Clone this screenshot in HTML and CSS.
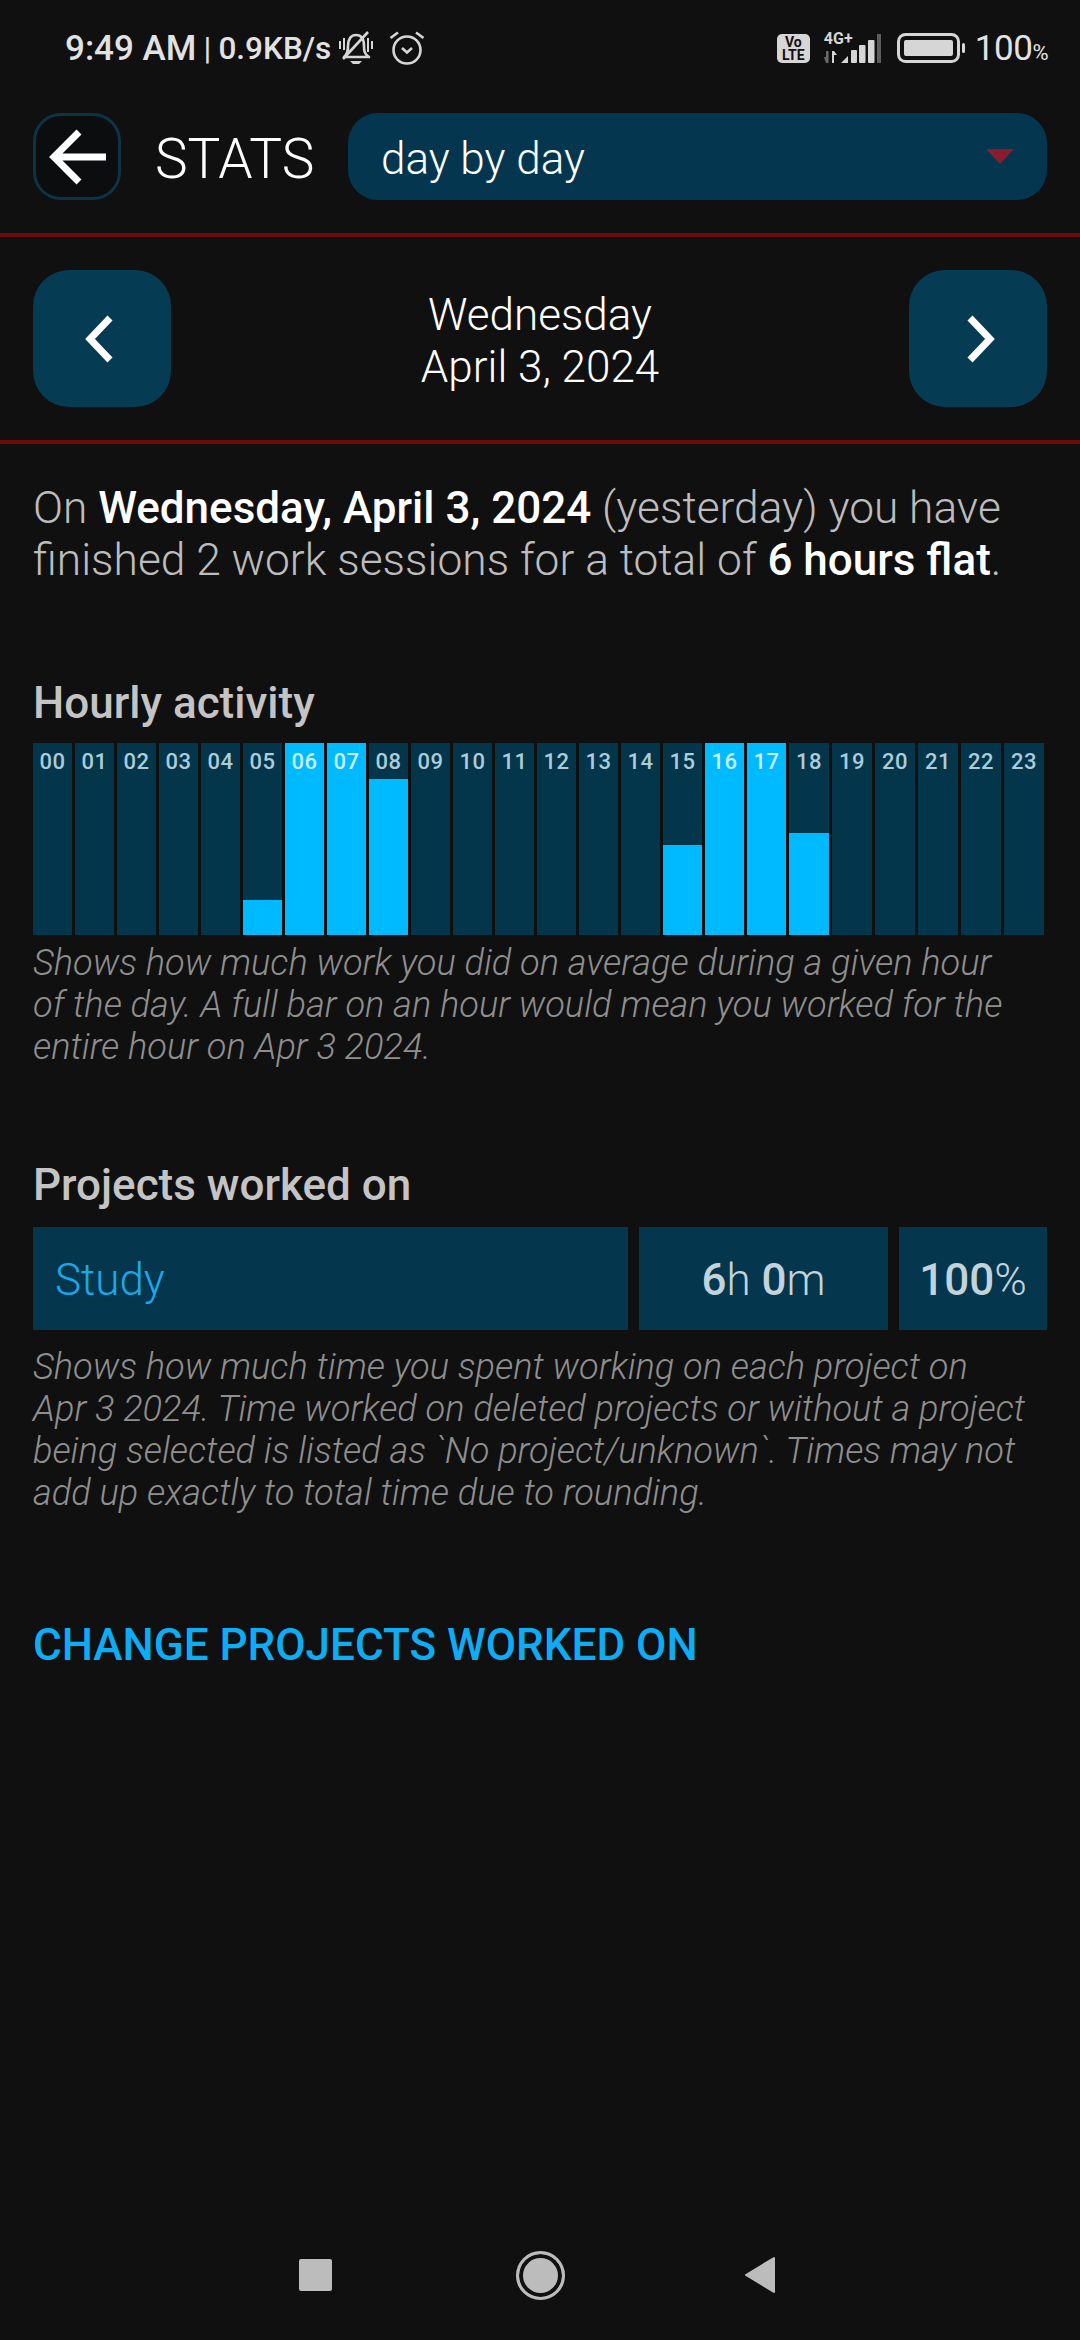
FILE: index.html
```html
<!DOCTYPE html>
<html lang="en">

<head>
  <meta charset="UTF-8" />
  <title>Stats</title>
  <meta name="viewport" content="width=device-width, initial-scale=1.0" />
  <link rel="stylesheet" href="styles.css">
</head>

<body>
  <div class="status">
    <div class="status-left">
      <span class="clock">9:49 AM</span>
      <span class="pipe">|</span>
      <span class="speed">0.9KB/s</span>
      <svg class="bell" width="34" height="34" viewBox="0 0 34 34">
        <path d="M5 26 C9 23 9 19 9 15 C9 8 12 4 17 4 C22 4 25 8 25 15 C25 19 25 23 30 26 Z" fill="none" stroke="#d6d6d6" stroke-width="2.600" stroke-linejoin="round" />
        <path d="M11 30 H23 L20 33 H14 Z" fill="#d6d6d6" />
        <path d="M4 28 L29 1" stroke="#d6d6d6" stroke-width="2.600" />
        <path d="M1 10 V18 M33 10 V18 M29 7 V21 M5 7 V19" stroke="#d6d6d6" stroke-width="2" />
      </svg>
      <svg class="alarm" width="36" height="34" viewBox="0 0 36 34">
        <circle cx="18" cy="19" r="13.500" fill="none" stroke="#d6d6d6" stroke-width="2.600" />
        <path d="M13 17 L18 21.500 L23 17" fill="none" stroke="#d6d6d6" stroke-width="2.600" />
        <path d="M1.500 7 L9 1.500 M34.500 7 L27 1.500" stroke="#d6d6d6" stroke-width="2.600" />
      </svg>
    </div>
    <div class="status-right">
      <span class="volte">Vo<br>LTE</span>
      <div class="signal">
        <span class="net">4G+</span>
        <svg width="57" height="31" viewBox="0 0 57 31">
          <path d="M2 18 H4.500 V30 H2 Z M0 24 H2 V30 Z" fill="#6a6a6a" />
          <path d="M8 18 H10 V30 H8 Z M10 18 L13 22 H10 Z" fill="#d6d6d6" />
          <path d="M17 30 L24 23 V30 Z" fill="#d6d6d6" />
          <rect x="27" y="17" width="6" height="13" rx="1" fill="#d6d6d6" />
          <rect x="35" y="12" width="6.500" height="18" rx="1" fill="#d6d6d6" />
          <rect x="44" y="7" width="6.500" height="23" rx="1" fill="#d6d6d6" />
          <rect x="53" y="1" width="4" height="29" fill="#5c5c5c" />
        </svg>
      </div>
      <svg class="battery" width="68" height="30" viewBox="0 0 68 30">
        <rect x="1.500" y="1.500" width="60" height="27" rx="7" fill="none" stroke="#d6d6d6" stroke-width="3" />
        <rect x="7" y="7" width="49" height="16" rx="2" fill="#d6d6d6" />
        <rect x="65" y="10" width="3" height="10" rx="1.500" fill="#d6d6d6" />
      </svg>
      <span class="charge">100<small>%</small></span>
    </div>
  </div>

  <div class="topbar">
    <button class="back">
      <svg width="58" height="58" viewBox="0 0 58 58">
        <path d="M31 4 L6 29 L31 54 M6 29 H58" fill="none" stroke="#fff" stroke-width="7" />
      </svg>
    </button>
    <h1>STATS</h1>
    <div class="picker">
      <span>day by day</span>
      <i class="caret"></i>
    </div>
  </div>

  <div class="datebar">
    <button class="nav prev">
      <svg width="30" height="48" viewBox="0 0 30 48">
        <path d="M26 3 L6 24 L26 45" fill="none" stroke="#fff" stroke-width="7" />
      </svg>
    </button>
    <div class="date">Wednesday<br>April 3, 2024</div>
    <button class="nav next">
      <svg width="30" height="48" viewBox="0 0 30 48">
        <path d="M4 3 L24 24 L4 45" fill="none" stroke="#fff" stroke-width="7" />
      </svg>
    </button>
  </div>

  <div class="content">
    <p class="summary">On <b>Wednesday, April 3, 2024</b> (yesterday) you have finished 2 work sessions for a total of <b>6 hours flat</b>.</p>

    <h2 class="hourly-title">Hourly activity</h2>
    <div class="chart">
      <div class="bar"><span>00</span></div>
      <div class="bar"><span>01</span></div>
      <div class="bar"><span>02</span></div>
      <div class="bar"><span>03</span></div>
      <div class="bar"><span>04</span></div>
      <div class="bar"><i style="height:18%"></i><span>05</span></div>
      <div class="bar on"><i style="height:100%"></i><span>06</span></div>
      <div class="bar on"><i style="height:100%"></i><span>07</span></div>
      <div class="bar"><i style="height:81.500%"></i><span>08</span></div>
      <div class="bar"><span>09</span></div>
      <div class="bar"><span>10</span></div>
      <div class="bar"><span>11</span></div>
      <div class="bar"><span>12</span></div>
      <div class="bar"><span>13</span></div>
      <div class="bar"><span>14</span></div>
      <div class="bar"><i style="height:47%"></i><span>15</span></div>
      <div class="bar on"><i style="height:100%"></i><span>16</span></div>
      <div class="bar on"><i style="height:100%"></i><span>17</span></div>
      <div class="bar"><i style="height:53%"></i><span>18</span></div>
      <div class="bar"><span>19</span></div>
      <div class="bar"><span>20</span></div>
      <div class="bar"><span>21</span></div>
      <div class="bar"><span>22</span></div>
      <div class="bar"><span>23</span></div>
    </div>
    <p class="note">Shows how much work you did on average during a given hour of the day. A full bar on an hour would mean you worked for the entire hour on Apr 3 2024.</p>

    <h2 class="projects-title">Projects worked on</h2>
    <div class="project">
      <div class="project-name">Study</div>
      <div class="project-time"><b>6</b>h <b>0</b>m</div>
      <div class="project-pct"><b>100</b>%</div>
    </div>
    <p class="note">Shows how much time you spent working on each project on Apr 3 2024. Time worked on deleted projects or without a project being selected is listed as `No project/unknown`. Times may not add up exactly to total time due to rounding.</p>

    <a class="change" href="#">CHANGE PROJECTS WORKED ON</a>
  </div>

  <div class="navbar">
    <i class="nav-square"></i>
    <i class="nav-circle"></i>
    <svg width="32" height="38" viewBox="0 0 32 38">
      <path d="M30 2 V36 L2 19 Z" fill="#bcbcbc" stroke="#bcbcbc" stroke-width="2" stroke-linejoin="round" />
    </svg>
  </div>
</body>

</html>
```

FILE: styles.css
```css
* {
  margin: 0;
  padding: 0;
  box-sizing: border-box;
  font-family: Roboto, "Liberation Sans", sans-serif;
}

body {
  width: 1080px;
  height: 2340px;
  background: #101010;
  color: #fff;
  display: flex;
  flex-direction: column;
  overflow: hidden;
}

button {
  border: none;
  display: flex;
  align-items: center;
  justify-content: center;
}

/* status bar */
.status {
  height: 66px;
  padding: 30px 32px 0 65px;
  display: flex;
  justify-content: space-between;
  align-items: center;
  color: #e2e2e2;
}

.status-left,
.status-right {
  display: flex;
  align-items: center;
}

.clock {
  font-size: 35px;
  font-weight: 500;
}

.pipe {
  width: 22px;
  font-size: 32px;
  text-align: center;
}

.speed {
  font-size: 31.500px;
  font-weight: 500;
}

.bell {
  margin-left: 8px;
}

.alarm {
  margin-left: 16px;
}

.volte {
  width: 33px;
  height: 29px;
  background: #d6d6d6;
  border-radius: 5px;
  color: #101010;
  font-size: 14px;
  font-weight: 700;
  line-height: 13px;
  text-align: center;
  padding-top: 2px;
}

.signal {
  position: relative;
  width: 57px;
  height: 31px;
  margin-left: 14px;
}

.net {
  position: absolute;
  left: 0;
  top: -2px;
  font-size: 16px;
  font-weight: 700;
  line-height: 15px;
  color: #d6d6d6;
}

.battery {
  margin-left: 16px;
}

.charge {
  font-size: 35px;
  margin-left: 10px;
  letter-spacing: -0.5px;
}

.charge small {
  font-size: 22px;
}

/* top bar */
.topbar {
  margin-top: 47px;
  padding: 0 33px 33px;
  height: 124px;
  border-bottom: 4px solid #6d0a0a;
  display: flex;
  align-items: flex-start;
}

.back {
  width: 88px;
  height: 87px;
  background: #0b0d0f;
  border: 3px solid #0d3347;
  border-radius: 28px;
  flex: none;
}

.topbar h1 {
  font-size: 55px;
  font-weight: 300;
  line-height: 92px;
  margin-left: 34px;
  width: 193px;
  flex: none;
}

.picker {
  flex: 1;
  height: 87px;
  background: #04374f;
  border-radius: 30px;
  padding: 4px 33px 0;
  display: flex;
  align-items: center;
  justify-content: space-between;
  font-size: 44px;
  font-weight: 300;
}

.caret {
  width: 0;
  height: 0;
  border-left: 14px solid transparent;
  border-right: 14px solid transparent;
  border-top: 15px solid #8b1c2e;
  margin-bottom: 4px;
}

/* date row */
.datebar {
  height: 207px;
  padding: 33px 33px 0;
  border-bottom: 4px solid #6d0a0a;
  display: flex;
  justify-content: space-between;
  align-items: flex-start;
}

.nav {
  width: 138px;
  height: 137px;
  background: #053b53;
  border-radius: 36px;
}

.prev svg {
  margin-right: 6px;
}

.next svg {
  margin-left: 6px;
}

.date {
  font-size: 44px;
  font-weight: 300;
  line-height: 52px;
  text-align: center;
  padding-top: 19px;
}

/* main content */
.content {
  flex: 1;
  padding: 38px 33px 0;
}

.summary {
  font-size: 44.300px;
  font-weight: 300;
  line-height: 52px;
  color: #bdbdbd;
}

.summary b {
  font-size: 44px;
  font-weight: 500;
  color: #fff;
}

h2 {
  font-size: 44px;
  font-weight: 500;
  line-height: 48px;
  color: #c4c4c4;
}

.hourly-title {
  margin-top: 93px;
}

.chart {
  margin-top: 16px;
  width: 1011px;
  height: 192px;
  display: grid;
  grid-template-columns: repeat(18, 39px) repeat(6, 40px);
  gap: 3px;
}

.bar {
  position: relative;
  background: #04364b;
  display: flex;
  flex-direction: column;
  justify-content: flex-end;
}

.bar i {
  display: block;
  background: #00baff;
}

.bar span {
  position: absolute;
  left: 0;
  right: 0;
  top: 5px;
  text-align: center;
  font-size: 22px;
  font-weight: 500;
  line-height: 28px;
  color: #adcbd8;
  letter-spacing: 0.5px;
}

.bar.on span {
  color: #c8eefc;
}

.note {
  margin-top: 7px;
  width: 993px;
  font-size: 36.200px;
  font-style: italic;
  font-weight: 300;
  line-height: 42px;
  color: #8f8f8f;
}

.projects-title {
  margin-top: 93px;
}

.project {
  margin-top: 18px;
  height: 103px;
  display: flex;
  gap: 11px;
  font-size: 44px;
  font-weight: 300;
  line-height: 107px;
  color: #c3d3db;
}

.project b {
  font-weight: 500;
}

.project div {
  background: #04364d;
}

.project-name {
  width: 595px;
  padding-left: 22px;
  color: #1aa8e8;
}

.project-time {
  width: 249px;
  text-align: center;
}

.project-pct {
  flex: 1;
  text-align: center;
}

.project + .note {
  margin-top: 16px;
}

.change {
  display: block;
  margin-top: 107px;
  font-size: 44px;
  font-weight: 500;
  line-height: 48px;
  color: #0cadf5;
  text-decoration: none;
}

/* android nav */
.navbar {
  height: 94px;
  padding: 0 0 0 299px;
  display: flex;
  align-items: flex-start;
}

.nav-square {
  width: 33px;
  height: 32px;
  margin-top: 13px;
  background: #bcbcbc;
  border-radius: 2px;
}

.nav-circle {
  width: 49px;
  height: 49px;
  margin: 5px 0 0 184px;
  border: 3px solid #bcbcbc;
  border-radius: 50%;
  background: #bcbcbc;
  box-shadow: inset 0 0 0 4px #101010;
}

.navbar svg {
  margin: 10px 0 0 179px;
}
```
